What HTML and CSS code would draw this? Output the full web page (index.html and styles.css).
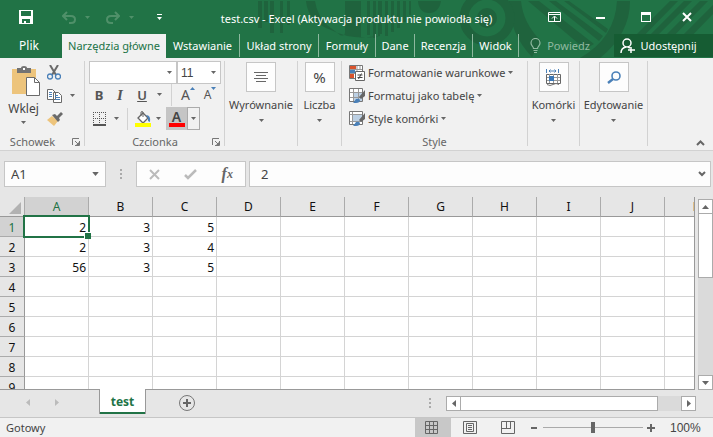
FILE: index.html
```html
<!DOCTYPE html>
<html lang="pl">
<head>
<meta charset="utf-8">
<title>test.csv - Excel</title>
<link rel="stylesheet" href="styles.css">
</head>
<body>
<div class="app">
  <svg width="0" height="0" class="defs" aria-hidden="true">
    <symbol id="caret" viewBox="0 0 5 3"><path d="M0 0h5L2.500 3z"/></symbol>
    <symbol id="launch" viewBox="0 0 8 8"><path d="M.5 7V.5H7M3 3l3.500 3.500M7.500 3v4.500H3" fill="none" stroke="#777"/><path d="M7 4v3H4z"/></symbol>
  </svg>

  <header class="top">
    <svg class="decor" viewBox="0 0 473 58" width="473" height="58" aria-hidden="true">
      <g fill="#1f633d">
        <path d="M18 1h4v27h-4zM24 1h4v21h-4zM30 1h4v32h-4zM40 1h3v32h-3zM47 1h3v24h-3zM66 1h9q2 14 12 24l13 10q5 2 5-3V1h16v37l17-2V1h2v35q-28 5-49-6Q68 22 66 1z"/>
        <path d="M127 1h3v34h-3zM133 1h3v37h-3zM139 1h3v33h-3zM145 1h3v35h-3zM151 1h3v31h-3zM157 1h3v27h-3zM163 1h3v21h-3zM169 1h2v14h-2zM178 1h23q-2 12-12 12T178 1z"/>
        <path d="M269 1h12q2 22 20 40l-9 16Q269 33 269 1zM377 1h13q0 33-30 57h-20q35-20 37-57zM288 1h11l55 43-9 5zM309 1h7l47 35-4 5zM324 1h5l39 28-2 4z"/>
        <path d="M386 45l44-44h8l-49 50zM400 45l44-44h8l-49 49zM418 43l42-42h8l-47 48zM437 41l36-36v9l-31 32z"/>
      </g>
      <circle cx="247" cy="18" r="23" fill="none" stroke="#1f633d" stroke-width="9"/>
      <circle cx="247" cy="18" r="10" fill="#1f633d"/>
    </svg>
    <div class="titlebar">
      <div class="quick">
        <button aria-label="Zapisz"><svg width="14" height="14" viewBox="0 0 14 14"><path fill="#fff" d="M0 0h14v14H0zM2 1v5h10V1zM3 9v4h2v-2h2v2h4V9z" fill-rule="evenodd"/></svg></button>
        <button class="dim undo" aria-label="Cofnij"><svg width="14" height="13" viewBox="0 0 14 13"><path d="M5 1L1 5l4 4M1 5h8q4 0 4 3.500T9 12H7" fill="none" stroke="currentColor" stroke-width="2"/></svg></button>
        <button class="dim" aria-label="Lista cofania"><svg class="caret" width="5" height="3"><use href="#caret"/></svg></button>
        <button class="dim redo" aria-label="Ponów"><svg width="14" height="13" viewBox="0 0 14 13"><path d="M9 1l4 4-4 4M13 5H5Q1 5 1 8.500T5 12h2" fill="none" stroke="currentColor" stroke-width="2"/></svg></button>
        <button class="dim" aria-label="Lista ponawiania"><svg class="caret" width="5" height="3"><use href="#caret"/></svg></button>
        <button class="custom" aria-label="Dostosuj pasek"><svg width="5" height="6" viewBox="0 0 5 6" fill="#fff"><path d="M0 0h5v1H0zM0 3h5L2.500 6z"/></svg></button>
      </div>
      <h1>test.csv - Excel (Aktywacja produktu nie powiodła się)</h1>
      <div class="window">
        <button aria-label="Opcje wstążki"><svg width="13" height="10" viewBox="0 0 13 10"><path d="M.5.5h12v9H.5zM1 2.500h11M6.500 9V4.500M4 6.500L6.500 4 9 6.500" fill="none" stroke="#fff"/></svg></button>
        <button aria-label="Minimalizuj"><svg width="9" height="10"><path d="M0 5h9v2H0z" fill="#fff"/></svg></button>
        <button aria-label="Maksymalizuj"><svg width="10" height="10"><path d="M0 0h10v10H0zM1 3v6h8V3z" fill-rule="evenodd" fill="#fff"/></svg></button>
        <button aria-label="Zamknij"><svg width="10" height="10"><path d="M1 1l8 8M9 1L1 9" stroke="#fff" stroke-width="2"/></svg></button>
      </div>
    </div>
    <nav class="tabs">
      <a href="#" class="file">Plik</a>
      <a href="#" class="active">Narzędzia główne</a>
      <a href="#">Wstawianie</a>
      <a href="#">Układ strony</a>
      <a href="#">Formuły</a>
      <a href="#">Dane</a>
      <a href="#">Recenzja</a>
      <a href="#">Widok</a>
      <a href="#" class="tell"><svg width="11" height="15" viewBox="0 0 11 15"><path d="M3.500 10.500C3.500 8 1 8 1 5a4.500 4.500 0 0 1 9 0c0 3-2.500 3-2.500 5.500zM3.500 12.500h4M4 14.500h3" fill="none" stroke="currentColor" stroke-width="1.200"/></svg>Powiedz</a>
      <a href="#" class="share"><svg width="15" height="16" viewBox="0 0 15 16"><circle cx="7" cy="5" r="4" fill="none" stroke="#fff" stroke-width="1.500"/><path d="M1 15q0-5 5-6M8 9l2 1M11 9v6M8 12h7" fill="none" stroke="#fff" stroke-width="1.500"/></svg>Udostępnij</a>
    </nav>
  </header>

  <section class="ribbon">
    <div class="group clip">
      <div class="body">
        <button class="paste">
          <svg width="28" height="31" viewBox="0 0 28 31"><path fill="#edc47c" d="M0 3h24v25H0z"/><path fill="#737373" d="M5 2h4q0-2 3-2t3 2h4v5H5z"/><path fill="#fff" d="M11 2h2v2h-2z"/><path d="M14.500 11.500h8l5 5v13h-13z" fill="#fff" stroke="#6a6a6a"/><path d="M22.500 11.500v5h5" fill="none" stroke="#6a6a6a"/></svg>
          <span>Wklej</span>
          <svg class="caret" width="5" height="3"><use href="#caret"/></svg>
        </button>
        <div class="clipcol">
          <button aria-label="Wytnij"><svg width="14" height="15" viewBox="0 0 14 15"><path d="M3 0l6 10M11 0L5 10" stroke="#6a6a6a" stroke-width="2"/><circle cx="3" cy="11.500" r="2.500" fill="none" stroke="#4a80b8" stroke-width="1.300"/><circle cx="11" cy="11.500" r="2.500" fill="none" stroke="#4a80b8" stroke-width="1.300"/></svg></button>
          <button aria-label="Kopiuj"><svg width="15" height="14" viewBox="0 0 15 14"><path d="M.5.5h5l3 3v7h-8zM6.500 3.500h5l3 3v7h-8z" fill="#fff" stroke="#6a6a6a"/><path d="M2 3.500h3M2 5.500h3M2 7.500h3M8 6.500h3M8 8.500h5M8 10.500h5" stroke="#4a80b8"/></svg><svg class="caret" width="5" height="3"><use href="#caret"/></svg></button>
          <button aria-label="Malarz formatów"><svg width="16" height="14" viewBox="0 0 16 14"><path d="M0 8l5-4 6 5-4 5z" fill="#edc47c"/><path d="M5 3l3-1 2 2 4-4 2 2-4 4 1 2-2 2z" fill="#6a6a6a"/></svg></button>
        </div>
      </div>
      <footer><span>Schowek</span><button aria-label="Okno schowka"><svg width="8" height="8"><use href="#launch"/></svg></button></footer>
    </div>

    <div class="group font">
      <div class="body rows">
        <div class="row combos">
          <label class="pick family"><select aria-label="Czcionka"><option></option></select><svg class="caret" width="5" height="3"><use href="#caret"/></svg></label>
          <label class="pick size"><select aria-label="Rozmiar"><option>11</option></select><svg class="caret" width="5" height="3"><use href="#caret"/></svg></label>
        </div>
        <div class="row letters">
          <button class="b">B</button><button class="i">I</button><button class="u">U</button>
          <button aria-label="Podkreślenie"><svg class="caret" width="5" height="3"><use href="#caret"/></svg></button>
          <i class="bar"></i>
          <button class="grow">A<svg width="5" height="3"><path d="M0 3h5L2.500 0z"/></svg></button>
          <button class="grow small">A<svg width="5" height="3"><path d="M0 0h5L2.500 3z"/></svg></button>
        </div>
        <div class="row paint">
          <button aria-label="Obramowanie"><svg width="13" height="14" viewBox="0 0 13 14"><path d="M.5 0v12M6.500 0v12M12.500 0v12M0 .5h13M0 6.500h13" stroke="#555" stroke-dasharray="1 1"/><path d="M0 13h13" stroke="#555" stroke-width="2"/></svg></button>
          <button aria-label="Lista obramowań"><svg class="caret" width="5" height="3"><use href="#caret"/></svg></button>
          <i class="bar"></i>
          <button aria-label="Kolor wypełnienia"><svg width="16" height="16" viewBox="0 0 16 16"><path d="M3 7l5-5 5 5-5 5z" fill="#fff" stroke="#666" stroke-width="1.300"/><path d="M6 5V1q1-1 2 0v5" fill="none" stroke="#666"/><path d="M11 4q5 0 4 7l-2-1V7z" fill="#4a80b8"/><path d="M0 12h16v4H0z" fill="#ff0"/></svg></button>
          <button aria-label="Lista wypełnień"><svg class="caret" width="5" height="3"><use href="#caret"/></svg></button>
          <button class="color"><span>A</span></button>
          <button class="colorlist" aria-label="Lista kolorów"><svg class="caret" width="5" height="3"><use href="#caret"/></svg></button>
        </div>
      </div>
      <footer><span>Czcionka</span><button aria-label="Okno czcionki"><svg width="8" height="8"><use href="#launch"/></svg></button></footer>
    </div>

    <button class="group big"><span class="tile"><svg width="14" height="11" viewBox="0 0 14 11"><path d="M0 .5h14M2 3.500h10M0 6.500h14M2 9.500h10" stroke="#666"/></svg></span><span>Wyrównanie</span><svg class="caret" width="5" height="3"><use href="#caret"/></svg></button>
    <button class="group big"><span class="tile pct">%</span><span>Liczba</span><svg class="caret" width="5" height="3"><use href="#caret"/></svg></button>

    <div class="group styles">
      <div class="body rows">
        <button><svg width="16" height="16" viewBox="0 0 16 16"><path d="M.5.5h13v13H.5z" fill="#fff" stroke="#777"/><path d="M1 1h6v3H1zM1 9h4v4H1z" fill="#d9532c"/><path d="M1 5h5v3H1z" fill="#4a80b8"/><path d="M8 1v5M11 1v4M1 4.500h12M1 8.500h5" stroke="#999"/><path d="M6.500 6.500h9v9h-9z" fill="#fff" stroke="#666"/><path d="M8.500 10h5M8.500 12.500h5M12.500 8.500l-3 5.500" stroke="#444"/></svg><span>Formatowanie warunkowe</span><svg class="caret" width="5" height="3"><use href="#caret"/></svg></button>
        <button><svg width="16" height="16" viewBox="0 0 16 16"><path d="M.5.5h13v13H.5z" fill="#fff" stroke="#777"/><path d="M4 4h9v9H4z" fill="#bcd0e4"/><path d="M4.500 1v12M9.500 1v12M1 4.500h12M1 9.500h12" stroke="#999"/><path d="M16 2v6l-4 3-2-2z" fill="#666"/><path d="M4 15q1-1 3-4 3-1 4 1 0 3-4 3z" fill="#4a80b8"/></svg><span>Formatuj jako tabelę</span><svg class="caret" width="5" height="3"><use href="#caret"/></svg></button>
        <button><svg width="16" height="16" viewBox="0 0 16 16"><path d="M.5.5h13v13H.5z" fill="#fff" stroke="#777"/><path d="M4 4h9v6H4z" fill="#bcd0e4"/><path d="M3.500 1v12M1 3.500h12M1 10.500h12" stroke="#999"/><path d="M16 2v6l-4 3-2-2z" fill="#666"/><path d="M4 15q1-1 3-4 3-1 4 1 0 3-4 3z" fill="#4a80b8"/></svg><span>Style komórki</span><svg class="caret" width="5" height="3"><use href="#caret"/></svg></button>
      </div>
      <footer><span>Style</span></footer>
    </div>

    <button class="group big"><span class="tile"><svg width="15" height="17" viewBox="0 0 15 17"><path d="M.5 0v4M12.500 0v4M3 2h7M4.500.500L3 2l1.500 1.500M8.500.500L10 2 8.500 3.500" fill="none" stroke="#4a80b8"/><path d="M.5 5.500h14v9H.5z" fill="#fff" stroke="#666"/><path d="M3.500 5v9M7.500 5v9M11.500 5v9M1 8.500h13M1 11.500h13" stroke="#999"/><path d="M3 7h5v5H3z" fill="#3a78b8"/><path d="M1 15.500q3 2 6 0t6 0" fill="none" stroke="#777"/></svg></span><span>Komórki</span><svg class="caret" width="5" height="3"><use href="#caret"/></svg></button>
    <button class="group big"><span class="tile"><svg width="14" height="13" viewBox="0 0 14 13"><circle cx="9" cy="5" r="4" fill="none" stroke="#4a80b8" stroke-width="1.600"/><path d="M6 8l-5 4" stroke="#4a80b8" stroke-width="2.500"/></svg></span><span>Edytowanie</span><svg class="caret" width="5" height="3"><use href="#caret"/></svg></button>
    <button class="collapse" aria-label="Zwiń wstążkę"><svg width="9" height="6"><path d="M1 5l3.500-3.500L8 5" fill="none" stroke="#666" stroke-width="2"/></svg></button>
  </section>

  <section class="formula">
    <label class="name"><input aria-label="Pole nazwy" value="A1"><svg class="caret" width="7" height="4" viewBox="0 0 5 3"><use href="#caret"/></svg></label>
    <i class="dots"></i>
    <div class="tools">
      <button aria-label="Anuluj"><svg width="11" height="11"><path d="M1 1l9 9M10 1l-9 9" stroke="#bbb" stroke-width="2"/></svg></button>
      <button aria-label="Wpis"><svg width="13" height="11"><path d="M1 6l3 3 8-8" fill="none" stroke="#bbb" stroke-width="2.500"/></svg></button>
      <button class="fx">f<sub>x</sub></button>
    </div>
    <label class="entry"><input aria-label="Pasek formuły" value="2"><svg width="8" height="6"><path d="M1 1l3 3 3-3" fill="none" stroke="#666" stroke-width="2"/></svg></label>
  </section>

  <main class="sheet">
    <div class="grid">
      <table>
        <thead><tr><th class="corner"><svg width="12" height="12"><path d="M12 0v12H0z" fill="#b2b2b2"/></svg></th><th class="on">A</th><th>B</th><th>C</th><th>D</th><th>E</th><th>F</th><th>G</th><th>H</th><th>I</th><th>J</th><th>K</th></tr></thead>
        <tbody>
          <tr><th class="on">1</th><td class="cursor">2</td><td>3</td><td>5</td><td></td><td></td><td></td><td></td><td></td><td></td><td></td><td></td></tr>
          <tr><th>2</th><td>2</td><td>3</td><td>4</td><td></td><td></td><td></td><td></td><td></td><td></td><td></td><td></td></tr>
          <tr><th>3</th><td>56</td><td>3</td><td>5</td><td></td><td></td><td></td><td></td><td></td><td></td><td></td><td></td></tr>
          <tr><th>4</th><td></td><td></td><td></td><td></td><td></td><td></td><td></td><td></td><td></td><td></td><td></td></tr>
          <tr><th>5</th><td></td><td></td><td></td><td></td><td></td><td></td><td></td><td></td><td></td><td></td><td></td></tr>
          <tr><th>6</th><td></td><td></td><td></td><td></td><td></td><td></td><td></td><td></td><td></td><td></td><td></td></tr>
          <tr><th>7</th><td></td><td></td><td></td><td></td><td></td><td></td><td></td><td></td><td></td><td></td><td></td></tr>
          <tr><th>8</th><td></td><td></td><td></td><td></td><td></td><td></td><td></td><td></td><td></td><td></td><td></td></tr>
          <tr><th>9</th><td></td><td></td><td></td><td></td><td></td><td></td><td></td><td></td><td></td><td></td><td></td></tr>
        </tbody>
      </table>
    </div>
    <div class="vscroll">
      <button aria-label="W górę"><svg width="7" height="4"><path d="M0 4h7L3.500 0z"/></svg></button>
      <i class="thumb"></i>
      <button class="end" aria-label="W dół"><svg width="7" height="4"><path d="M0 0h7L3.500 4z"/></svg></button>
    </div>
  </main>

  <section class="sheets">
    <div class="arrows">
      <button aria-label="Poprzedni arkusz"><svg width="4" height="7"><path d="M4 0v7L0 3.500z"/></svg></button>
      <button aria-label="Następny arkusz"><svg width="4" height="7"><path d="M0 0v7l4-3.500z"/></svg></button>
    </div>
    <a href="#" class="sheettab">test</a>
    <button class="add" aria-label="Nowy arkusz"><svg width="16" height="16"><circle cx="8" cy="8" r="7.500" fill="none" stroke="#777"/><path d="M8 4v8M4 8h8" stroke="#666" stroke-width="2"/></svg></button>
    <i class="dots"></i>
    <div class="hscroll">
      <button aria-label="W lewo"><svg width="4" height="7"><path d="M4 0v7L0 3.500z"/></svg></button>
      <i class="thumb"></i>
      <button class="end" aria-label="W prawo"><svg width="4" height="7"><path d="M0 0v7l4-3.500z"/></svg></button>
    </div>
  </section>

  <footer class="status">
    <span class="ready">Gotowy</span>
    <button class="view on" aria-label="Normalny"><svg width="13" height="13"><path d="M.5.500h12v12H.5zM4.500 0v13M8.500 0v13M0 4.500h13M0 8.500h13" fill="none" stroke="#666"/></svg></button>
    <button class="view" aria-label="Układ strony"><svg width="14" height="13"><path d="M.5.500h13v12H.5zM3.500 2.500h7v8h-7zM5 4.500h4M5 6.500h4M5 8.500h4" fill="none" stroke="#666"/></svg></button>
    <button class="view" aria-label="Podział stron"><svg width="14" height="13"><path d="M.5.500h13v12H.5zM5.500 0v7M9.500 0v7M0 7.500h10" fill="none" stroke="#666"/></svg></button>
    <div class="zoom">
      <button aria-label="Pomniejsz"><svg width="6" height="6"><path d="M0 3h6" stroke="#666" stroke-width="2"/></svg></button>
      <input type="range" aria-label="Powiększenie" min="0" max="200" value="100">
      <button aria-label="Powiększ"><svg width="8" height="8"><path d="M0 4h8M4 0v8" stroke="#666" stroke-width="2"/></svg></button>
      <button class="percent">100%</button>
    </div>
  </footer>
</div>
</body>
</html>
```
FILE: styles.css
```css
* { box-sizing: border-box; }
body { margin: 0; }
svg { display: block; flex: none; }
.defs { position: absolute; }
button, input, select {
  margin: 0; padding: 0; border: 0; border-radius: 0; background: none;
  color: inherit; font: inherit; outline: 0; min-width: 0;
}
button { display: flex; align-items: center; justify-content: center; }
a { color: inherit; text-decoration: none; }
.caret { fill: #666; }
.app {
  height: 100vh; display: flex; flex-direction: column; overflow: hidden;
  font: 12px/16px "Noto Sans", "Open Sans", sans-serif;
  color: #444; background: #e6e6e6;
}

/* Title bar and ribbon tabs */
.top { position: relative; flex: none; background: #217346; color: #fff; overflow: hidden; }
.decor { position: absolute; top: 0; right: 0; }
.titlebar { position: relative; height: 34px; display: grid; grid-template-columns: 1fr auto 1fr; align-items: center; }
.titlebar h1 { margin: 0; padding-top: 4px; font-size: 11px; font-weight: 400; white-space: nowrap; }
.quick { display: flex; align-items: center; padding-left: 19px; }
.quick .dim { color: #4f9069; }
.quick .dim .caret { fill: #4f9069; }
.quick .undo { margin: 0 9px 0 29px; }
.quick .redo { margin: 0 9px 0 16px; }
.quick .custom { margin-left: 23px; }
.window { display: flex; justify-content: flex-end; }
.window button { width: 46px; height: 32px; }
.window button:last-child { width: 44px; padding-right: 8px; }
.tabs { position: relative; height: 24px; display: grid; grid-template-columns: 62px 104px 74px 79px 57px 39px 58px 46px 95px 1fr; font-size: 11px; }
.tabs a { display: flex; align-items: center; justify-content: center; white-space: nowrap; border-right: 1px solid #8db89e; margin-bottom: 1px; }
.tabs .file, .tabs .tell, .tabs .share { border: 0; }
.tabs .file { padding-right: 4px; font-size: 12px; }
.tabs .active { background: #f1f1f1; color: #217346; border: 0; margin: 0; }
.tabs .tell { color: #8fb9a0; gap: 6px; padding-right: 13px; }
.tabs .share { background: #165c33; gap: 5px; padding-right: 10px; }

/* Ribbon */
.ribbon { flex: none; height: 93px; padding-top: 3px; display: flex; background: #f1f1f1; border-bottom: 1px solid #d2d2d2; position: relative; }
.group { flex: none; height: 85px; display: flex; flex-direction: column; border-right: 1px solid #d2d2d2; }
.group .body { flex: 1; display: flex; min-height: 0; }
.group .rows { flex-direction: column; }
.group footer { height: 8px; display: flex; justify-content: center; align-items: center; position: relative; font-size: 11px; color: #666; }
.group footer button { position: absolute; right: 4px; top: 0; }
#launch { fill: #777; }
.clip { width: 85px; }
.clip footer { padding-right: 19px; }
.paste { width: 47px; flex-direction: column; justify-content: flex-start; padding-top: 5px; gap: 5px; }
.paste svg:first-child { margin-left: 5px; }
.paste span { line-height: 14px; }
.clipcol { display: flex; flex-direction: column; padding-top: 0; }
.clipcol button { height: 23px; gap: 8px; justify-content: flex-start; }
.font { width: 140px; padding: 0 0 0 4px; }
.font footer { padding-right: 3px; }
.font .row { display: flex; align-items: center; height: 23px; }
.pick { display: flex; align-items: center; height: 23px; border: 1px solid #c6c6c6; background: #fff; position: relative; }
.pick select { appearance: none; width: 100%; height: 100%; padding-left: 3px; font: 12px "Liberation Sans", Arial, sans-serif; color: #444; }
.pick .caret { position: absolute; right: 4px; }
.family { width: 88px; }
.size { width: 44px; margin-left: 0; }
.letters { font-size: 13px; line-height: 14px; color: #555; padding-bottom: 2px; }
.letters button { width: 22px; }
.letters .b { width: 20px; font-weight: 700; }
.letters .i { font-style: italic; font-family: "Liberation Serif", serif; font-weight: 700; font-size: 15px; }
.letters .u { text-decoration: underline; font-weight: 600; }
.letters button:nth-child(4) { width: 13px; }
.bar { width: 1px; height: 22px; background: #d2d2d2; margin: 0 5px; }
.letters .grow { align-items: center; font-size: 14px; }
.letters .grow svg { fill: #4a80b8; margin-bottom: 12px; }
.letters .small { font-size: 12px; }
.paint button { height: 22px; }
.paint button:first-child { width: 21px; }
.paint button:nth-child(2) { width: 13px; }
.paint .bar { margin: 0 7px 0 4px; }
.paint button:nth-child(5) { width: 15px; }
.paint .color { width: 21px; height: 23px; background: #c5c5c5; }
.color span { width: 16px; height: 16px; border-bottom: 4px solid #f00; font-size: 14px; line-height: 12px; font-weight: 600; }
.paint .colorlist { width: 13px; height: 23px; border: 1px solid #ababab; }
.big { justify-content: flex-start; width: 73px; padding-top: 1px; }
.big > .caret { margin-top: 6px; }
.big > span { font-size: 11px; }
.big .tile { width: 30px; height: 30px; margin-bottom: 5px; display: flex; align-items: center; justify-content: center; background: #fdfdfd; border: 1px solid #c6c6c6; }
.big .pct { font-size: 15px; }
.big:nth-child(4) { width: 44px; }
.big:nth-child(6) { width: 52px; }
.big:nth-child(7) { width: 68px; }
.styles { width: 186px; }
.styles .body { padding-left: 7px; }
.styles .body button { height: 23px; gap: 3px; justify-content: flex-start; font-size: 11px; white-space: nowrap; }
.collapse { position: absolute; right: 8px; bottom: 4px; }

/* Formula bar */
.formula { flex: none; height: 46px; padding: 10px 2px 10px 4px; display: flex; font-size: 13px; }
.formula label, .tools { background: #fdfdfd; border: 1px solid #c6c6c6; height: 26px; display: flex; align-items: center; }
.name { width: 102px; padding: 0 6px; }
.name input, .entry input { flex: 1; width: 0; }
.dots { width: 2px; height: 10px; background: repeating-linear-gradient(#aaa 0 2px, transparent 2px 4px); }
.formula .dots { margin: 8px 14px; }
.tools { width: 110px; justify-content: space-around; }
.fx { font: italic 700 16px/20px "Liberation Serif", serif; color: #666; }
.fx sub { font-size: 12px; line-height: 0; }
.entry { flex: 1; margin-left: 3px; padding: 0 4px 0 11px; }

/* Worksheet */
.sheet { flex: 1; min-height: 0; display: flex; }
.grid { flex: 1; min-width: 0; overflow: hidden; border-right: 1px solid #999; border-bottom: 1px solid #999; }
table { table-layout: fixed; width: 729px; border-spacing: 0; color: #111; font-size: 12px; line-height: 16px; }
th, td { padding: 0; height: 20px; }
th { font-weight: 400; background: #e6e6e6; border-right: 1px solid #ababab; border-bottom: 1px solid #ababab; }
thead th { width: 64px; border-bottom-color: #999; }
thead .corner { width: 25px; border-right-color: #ababab; }
.corner svg { margin: 3px 0 0 9px; }
tbody th { padding-top: 2px; border-right-color: #999; }
th.on { background: #d2d2d2; color: #217346; }
td { background: #fff; border-right: 1px solid #d4d4d4; border-bottom: 1px solid #d4d4d4; text-align: right; padding: 2px 2px 0 0; }
.cursor { position: relative; }
.cursor::before { content: ""; position: absolute; inset: -2px; border: 2px solid #217346; }
.cursor::after { content: ""; position: absolute; right: -3px; bottom: -3px; width: 6px; height: 6px; background: #217346; border: solid #fff; border-width: 1px 0 0 1px; }

/* Scroll bars */
.vscroll { flex: none; width: 15px; margin: 2px 0 0 3px; display: flex; flex-direction: column; background: #dadada; }
.vscroll button, .hscroll button { width: 15px; height: 15px; background: #fff; border: 1px solid #ababab; fill: #666; }
.thumb { background: #fff; border: 1px solid #ababab; }
.vscroll .thumb { height: 65px; margin-top: -1px; }
.vscroll .end { margin-top: auto; }
.hscroll { flex: none; width: 250px; height: 15px; display: flex; background: #dadada; margin: 6px 17px 0 15px; }
.hscroll .thumb { width: 198px; margin-left: -1px; }
.hscroll .end { margin-left: auto; }

/* Sheet tabs */
.sheets { flex: none; height: 28px; display: flex; align-items: flex-start; border-bottom: 1px solid #c6c6c6; }
.arrows { width: 99px; height: 25px; display: flex; padding-left: 26px; gap: 25px; fill: #bbb; }
.sheettab { width: 47px; height: 25px; margin-top: -1px; display: flex; align-items: center; justify-content: center; background: #fff; border: 1px solid #999; border-width: 0 1px; box-shadow: inset 0 -2px #217346; color: #217346; font-weight: 700; position: relative; }
.add { margin: 5px auto 0 33px; }
.sheets .dots { margin-top: 8px; }

/* Status bar */
.status { flex: none; height: 19px; display: flex; background: #f1f1f1; font-size: 11px; align-items: stretch; }
.ready { flex: 1; padding: 2px 6px; }
.view { width: 38px; }
.view.on { width: 36px; background: #c8c8c8; padding-right: 3px; }
.zoom { display: flex; align-items: center; width: 186px; padding-left: 4px; }
.zoom input { appearance: none; width: 100px; height: 10px; margin: 0 4px 0 6px; background: linear-gradient(#aaa, #aaa) center / 100% 1px no-repeat; }
.zoom input::-webkit-slider-thumb { appearance: none; width: 4px; height: 11px; background: #666; }
.percent { margin-left: 15px; font-family: "Liberation Sans", Arial, sans-serif; font-size: 12px; }
```
